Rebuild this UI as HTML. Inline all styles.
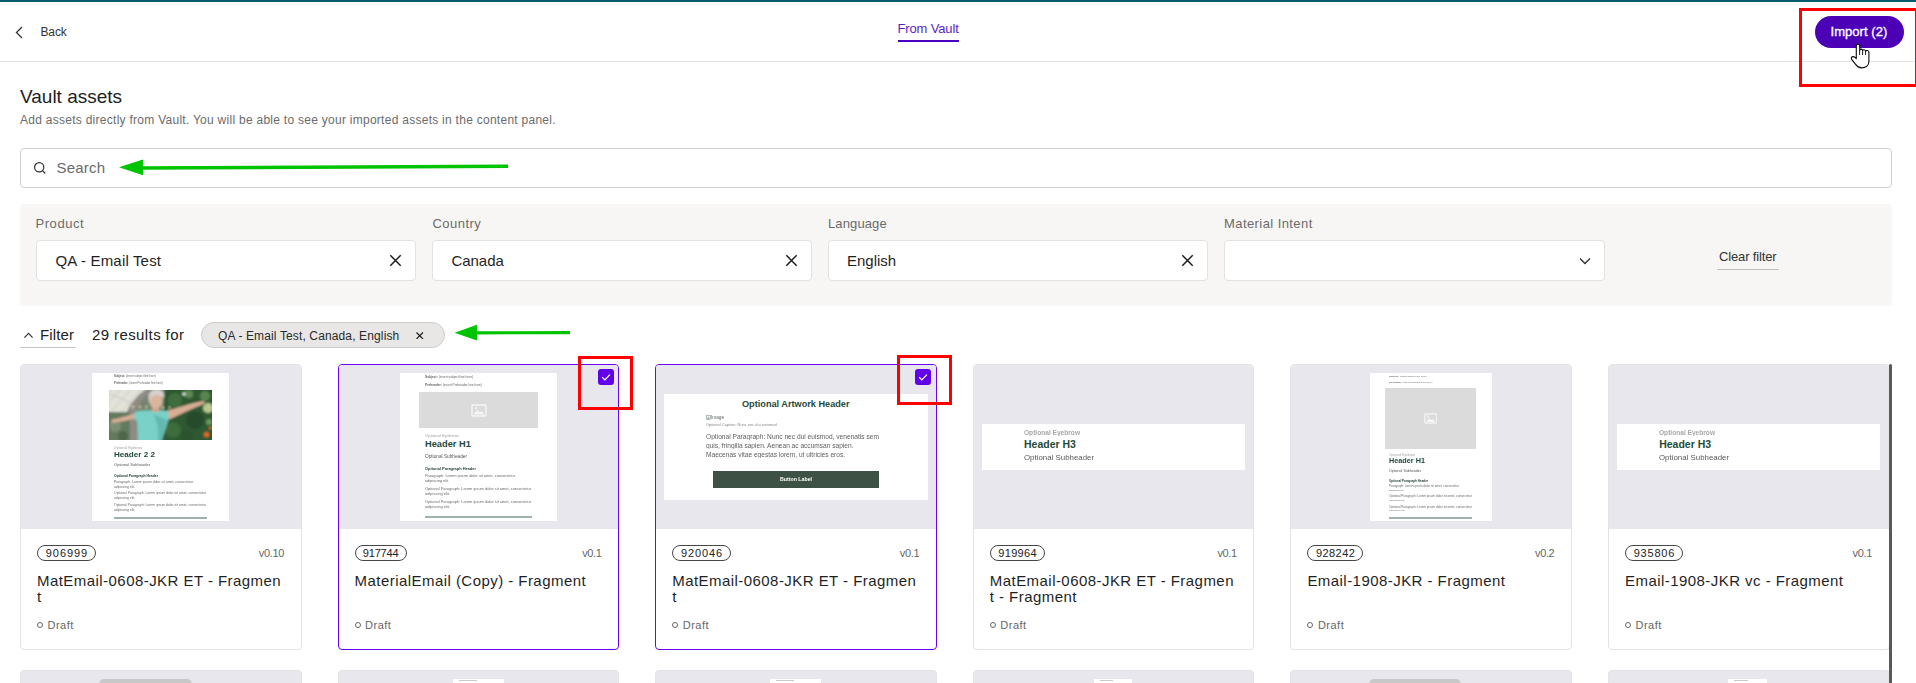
<!DOCTYPE html>
<html><head><meta charset="utf-8">
<style>
*{margin:0;padding:0;box-sizing:border-box}
html,body{width:1916px;height:683px;overflow:hidden;background:#fff;font-family:"Liberation Sans",sans-serif;color:#222}
.a{position:absolute;white-space:nowrap;line-height:1}
#topbar{position:absolute;left:0;top:0;width:1916px;height:2px;background:#075a6d}
#sep{position:absolute;left:0;top:61px;width:1916px;height:1px;background:#e3e3e3}
.btn{position:absolute;left:1815px;top:16px;width:89px;height:32px;border-radius:16px;background:#4b00b8}
.red{position:absolute;border:3px solid #ff0000}
.search{position:absolute;left:20px;top:148px;width:1872px;height:40px;border:1px solid #cfcfcf;border-radius:4px}
.panel{position:absolute;left:20px;top:204px;width:1872px;height:102px;background:#f7f6f4;border-radius:4px}
.inp{position:absolute;top:240px;width:380px;height:41px;background:#fff;border:1px solid #e4e2df;border-radius:4px}
.lbl{font-size:13px;color:#6b6b6b}
.val{font-size:15px;color:#1f1f1f}
.chip{position:absolute;left:201px;top:322px;width:244px;height:26px;border-radius:13px;background:#e8e7e6;border:1px solid #cbcbcb}
.card{position:absolute;top:364px;width:281.6px;height:286px;border:1px solid #e3e2e4;border-radius:4px;overflow:hidden;background:#fff}
.card.sel{border-color:#6a00f4}
.prev{position:absolute;top:365px;width:279.6px;height:164px;background:#e9e7ee;border-radius:3px 3px 0 0}
.photo{background:linear-gradient(90deg,#8d958c 0%,#b9bdb5 12%,#7f8a80 28%,#6fb8b0 38%,#7cc4bd 48%,#3d6a44 60%,#2f5a36 75%,#47703f 90%,#6d8a52 100%)}
.badge{position:absolute;left:16px;top:180px;height:16px;border:1px solid #444;border-radius:8px;font-size:11px;line-height:14px;padding:0 8px;color:#222}
.ver{position:absolute;right:17px;top:185px;font-size:11px;color:#666;line-height:1}
.ttl{position:absolute;left:16px;top:208px;font-size:15px;line-height:16px;color:#1f1f1f;white-space:nowrap}
.draft{position:absolute;left:16px;top:256px;font-size:11px;color:#666;line-height:1}
.draft i{display:inline-block;width:6px;height:6px;border:1px solid #555;border-radius:50%;margin-right:4px;vertical-align:0}
.chk{position:absolute;width:16px;height:16px;background:#6200ea;border-radius:3px}
.card2{position:absolute;top:670px;width:281.6px;height:40px;border:1px solid #e3e2e4;border-radius:4px;background:#e9e7ee}
.w{position:absolute;background:#fff}
</style></head><body>
<div id="topbar"></div>
<!-- header -->
<svg class="a" style="left:15px;top:26px" width="9" height="13" viewBox="0 0 9 13"><path d="M7 1 L1.5 6.5 L7 12" fill="none" stroke="#333" stroke-width="1.3"/></svg>
<div class="a" style="left:40.5px;top:26px;font-size:12px;color:#333;letter-spacing:-0.15px">Back</div>
<div class="a" style="left:897.5px;top:22px;font-size:13px;color:#5b1ec2;letter-spacing:-0.15px">From Vault</div>
<div class="a" style="left:898px;top:40px;width:61px;height:2px;background:#4a00c4"></div>
<div id="sep"></div>
<div class="btn"></div>
<div class="a" style="left:1830.5px;top:25px;font-size:13px;color:#fff;letter-spacing:0.05px;-webkit-text-stroke:0.35px #fff">Import (2)</div>
<div class="red" style="left:1799px;top:8px;width:119px;height:79px"></div>

<!-- title -->
<div class="a" style="left:20px;top:87px;font-size:19px;color:#222">Vault assets</div>
<div class="a" style="left:20px;top:114px;font-size:12px;color:#6b6b6b;letter-spacing:0.27px">Add assets directly from Vault. You will be able to see your imported assets in the content panel.</div>

<!-- search -->
<div class="search"></div>
<svg class="a" style="left:33px;top:161px" width="15" height="15" viewBox="0 0 15 15"><circle cx="6.2" cy="6.3" r="4.6" fill="none" stroke="#333" stroke-width="1.25"/><path d="M9.5 9.6 L12.4 12.5" stroke="#333" stroke-width="1.25"/></svg>
<div class="a" style="left:56.5px;top:160px;font-size:15px;color:#6b6b6b;letter-spacing:0.2px">Search</div>

<!-- panel -->
<div class="panel"></div>
<div class="a lbl" style="left:35.5px;top:217px;letter-spacing:0.55px">Product</div>
<div class="a lbl" style="left:432.5px;top:217px;letter-spacing:0.45px">Country</div>
<div class="a lbl" style="left:828px;top:217px;letter-spacing:0.12px">Language</div>
<div class="a lbl" style="left:1224px;top:217px;letter-spacing:0.42px">Material Intent</div>
<div class="inp" style="left:36px"></div>
<div class="inp" style="left:432px"></div>
<div class="inp" style="left:828px"></div>
<div class="inp" style="left:1224px;width:381px"></div>
<div class="a val" style="left:55.5px;top:253px;letter-spacing:0.17px">QA - Email Test</div>
<div class="a val" style="left:451.5px;top:253px;letter-spacing:-0.05px">Canada</div>
<div class="a val" style="left:847px;top:253px">English</div>
<svg class="a" style="left:389px;top:254px" width="13" height="13" viewBox="0 0 13 13"><path d="M1.3 1.3 L11.7 11.7 M11.7 1.3 L1.3 11.7" stroke="#1a1a1a" stroke-width="1.45"/></svg>
<svg class="a" style="left:785px;top:254px" width="13" height="13" viewBox="0 0 13 13"><path d="M1.3 1.3 L11.7 11.7 M11.7 1.3 L1.3 11.7" stroke="#1a1a1a" stroke-width="1.45"/></svg>
<svg class="a" style="left:1181px;top:254px" width="13" height="13" viewBox="0 0 13 13"><path d="M1.3 1.3 L11.7 11.7 M11.7 1.3 L1.3 11.7" stroke="#1a1a1a" stroke-width="1.45"/></svg>
<svg class="a" style="left:1579px;top:257px" width="12" height="8" viewBox="0 0 12 8"><path d="M1 1.5 L6 6.5 L11 1.5" fill="none" stroke="#333" stroke-width="1.4"/></svg>
<div class="a" style="left:1719px;top:250px;font-size:13px;color:#333;letter-spacing:-0.15px">Clear filter</div>
<div class="a" style="left:1717px;top:269px;width:62px;height:1px;background:#bdbdbd"></div>

<!-- filter row -->
<svg class="a" style="left:23px;top:331px" width="11" height="8" viewBox="0 0 11 8"><path d="M1.4 6.6 L5.5 2.4 L9.6 6.6" fill="none" stroke="#333" stroke-width="1.2"/></svg>
<div class="a" style="left:40px;top:327px;font-size:15px;color:#222;letter-spacing:0.15px">Filter</div>
<div class="a" style="left:20px;top:347px;width:56px;height:1px;background:#c4c4c4"></div>
<div class="a" style="left:92px;top:327px;font-size:15px;color:#222;letter-spacing:0.4px">29 results for</div>
<div class="chip"></div>
<div class="a" style="left:218px;top:330px;font-size:12px;color:#2a2a2a;letter-spacing:0.13px">QA - Email Test, Canada, English</div>
<svg class="a" style="left:416px;top:331.5px" width="7.5" height="7.5" viewBox="0 0 7.5 7.5"><path d="M0.5 0.5 L7 7 M7 0.5 L0.5 7" stroke="#1a1a1a" stroke-width="1.1"/></svg>

<!-- arrows -->
<svg class="a" style="left:0;top:0" width="1916" height="683" viewBox="0 0 1916 683">
<path d="M142 168 L508 166.3" stroke="#00c400" stroke-width="3.6" fill="none"/>
<path d="M119 167.2 L143 159.5 L143 175.3 Z" fill="#00c400"/>
<path d="M476 332.8 L570 332.6" stroke="#00c400" stroke-width="3.2" fill="none"/>
<path d="M454.5 332.8 L477 324.8 L477 340.6 Z" fill="#00c400"/>
</svg>

<!-- cards row 1 -->
<div class="card" style="left:20.0px"></div>
<div class="prev" style="left:21.0px"></div>
<div class="a" style="left:92.00px;top:373.00px;width:137px;height:148px;background:#fff"></div>
<div class="a" style="left:114.00px;top:374.82px;font-size:20px;transform-origin:0 0;transform:scale(0.1408);color:#666;"><b>Subject:</b> (insert subject line here)</div>
<div class="a" style="left:114.00px;top:381.84px;font-size:20px;transform-origin:0 0;transform:scale(0.1379);color:#666;"><b>Preheader:</b> (insert Preheader line here)</div>
<svg class="a" style="left:109px;top:390px" width="103" height="50" viewBox="0 0 103 50">
<defs><filter id="bl" x="-10%" y="-10%" width="120%" height="120%"><feGaussianBlur stdDeviation="1.1"/></filter>
<clipPath id="cp"><rect width="103" height="50"/></clipPath></defs>
<rect width="103" height="50" fill="#34603a"/>
<g filter="url(#bl)" clip-path="url(#cp)">
<rect x="-3" y="-3" width="60" height="56" fill="#74846f"/>
<path d="M-3 -3 H40 C30 4 22 12 18 22 H-3 Z" fill="#e3e2da"/>
<path d="M4 -3 L-3 6 M14 -3 L-3 15 M24 -3 L2 22 M34 -3 L12 22 M-3 4 C8 6 18 10 24 16" stroke="#c9c8c0" stroke-width="1" fill="none"/>
<path d="M40 -3 C30 4 22 12 18 22 L20 53 H30 C28 40 26 30 27 22 C30 12 36 6 44 2 L56 -3 Z" fill="#8f8b85"/>
<rect x="-3" y="22" width="24" height="31" fill="#637a5e"/>
<circle cx="6" cy="36" r="6" fill="#7b9074"/><circle cx="14" cy="46" r="5" fill="#50664c"/>
<path d="M56 -3 H106 V53 H52 Z" fill="#2e5833"/>
<circle cx="66" cy="10" r="7" fill="#3f6e3e"/><circle cx="80" cy="4" r="4" fill="#5e8a55"/><circle cx="75" cy="4" r="1.8" fill="#dfe6d6"/>
<circle cx="86" cy="30" r="9" fill="#264c2b"/><circle cx="64" cy="40" r="8" fill="#3d6c3c"/><circle cx="78" cy="46" r="6" fill="#2a522f"/>
<circle cx="99" cy="18" r="5" fill="#b9c98d"/><circle cx="96" cy="6" r="5" fill="#5a8550"/><circle cx="100" cy="32" r="3" fill="#6c9660"/>
<circle cx="97.5" cy="44.5" r="2.6" fill="#e86a1e"/><circle cx="101.5" cy="38" r="1.5" fill="#e26a20"/>
<g fill="#efe2b8"><circle cx="9" cy="16.5" r="1"/><circle cx="16" cy="16.5" r="1"/><circle cx="24" cy="16.8" r="1.1"/><circle cx="31" cy="17" r="1"/><circle cx="37.5" cy="17" r="1"/><circle cx="54" cy="17.5" r="1.1"/><circle cx="60.5" cy="17.5" r="1"/></g>
<path d="M3 29.5 C10 28.5 18 26 26 23.5 L28 28 C20 30 11 32 4 33 C2.5 33 2 30 3 29.5 Z" fill="#d9ae95"/>
<path d="M57 21 C68 18 82 13 94 11 C96 11 96 13.5 94.5 14 C84 18 70 25 60 29.5 Z" fill="#d9ae95"/>
<path d="M26 22 C32 20 38 20.5 44 20.5 C50 20.5 55 20 59 21.5 L60 28 L52 53 H29 L28 31 L25 29 Z" fill="#79d1c7"/>
<path d="M44 24 C48 30 50 40 49 53 H52 L58 30 Z" fill="#63b9b0"/>
<rect x="43" y="15" width="7" height="7" fill="#cfa58e"/>
<ellipse cx="47" cy="10.5" rx="6.6" ry="8" fill="#dcb59d"/>
<path d="M39.5 9 C39 2 43 -0.5 48 -0.5 C53 -0.5 56 2.5 55 8.5 C52 4 45 4 41.5 7.5 L41 14 Z" fill="#d4d2cf"/>
</g></svg>
<div class="a" style="left:114.00px;top:445.51px;font-size:20px;transform-origin:0 0;transform:scale(0.1774);color:#a5a5a5;">Optional Eyebrow</div>
<div class="a" style="left:114.00px;top:449.92px;font-size:20px;transform-origin:0 0;transform:scale(0.4053);color:#1f4a3a;font-weight:bold;">Header 2 2</div>
<div class="a" style="left:114.00px;top:462.90px;font-size:20px;transform-origin:0 0;transform:scale(0.2023);color:#555;">Optional Subheader</div>
<div class="a" style="left:114.00px;top:473.57px;font-size:20px;transform-origin:0 0;transform:scale(0.1699);color:#1e3a30;font-weight:bold;">Optional Paragraph Header</div>
<div class="a" style="left:114.00px;top:480.06px;font-size:20px;transform-origin:0 0;transform:scale(0.1717);color:#6a6a6a;">Paragraph: Lorem ipsum dolor sit amet, consectetur</div>
<div class="a" style="left:114.00px;top:484.60px;font-size:20px;transform-origin:0 0;transform:scale(0.1672);color:#6a6a6a;">adipiscing elit.</div>
<div class="a" style="left:114.00px;top:491.27px;font-size:20px;transform-origin:0 0;transform:scale(0.1703);color:#6a6a6a;">Optional Paragraph: Lorem ipsum dolor sit amet, consectetur</div>
<div class="a" style="left:114.00px;top:496.00px;font-size:20px;transform-origin:0 0;transform:scale(0.1672);color:#6a6a6a;">adipiscing elit.</div>
<div class="a" style="left:114.00px;top:502.97px;font-size:20px;transform-origin:0 0;transform:scale(0.1703);color:#6a6a6a;">Optional Paragraph: Lorem ipsum dolor sit amet, consectetur</div>
<div class="a" style="left:114.00px;top:508.20px;font-size:20px;transform-origin:0 0;transform:scale(0.1672);color:#6a6a6a;">adipiscing elit.</div>
<div class="a" style="left:114.00px;top:517.00px;width:93px;height:1.6px;background:#9fb2aa"></div>
<div class="a" style="left:37.00px;top:545.00px;height:16px;border:1px solid #474747;border-radius:8px;width:59px;font-size:11px;line-height:14px;color:#222;text-align:center;letter-spacing:0.93px;padding-left:0.93px">906999</div>
<div class="a" style="left:284.00px;top:548.00px;font-size:11px;color:#666;letter-spacing:-0.35px;transform:translateX(-100%)">v0.10</div>
<div class="a" style="left:37.00px;top:573.00px;font-size:15px;line-height:16px;color:#1f1f1f;letter-spacing:0.45px">MatEmail-0608-JKR ET - Fragmen<br>t</div>
<div class="a" style="left:37.00px;top:622.00px;width:6px;height:6px;border:1px solid #666;border-radius:50%"></div>
<div class="a" style="left:47.50px;top:620.00px;font-size:11px;color:#666;letter-spacing:0.5px">Draft</div>
<div class="card2" style="left:20.0px"></div>
<div class="card sel" style="left:337.6px"></div>
<div class="prev" style="left:338.6px"></div>
<div class="a" style="left:400.00px;top:373.00px;width:157px;height:148px;background:#fff"></div>
<div class="a" style="left:425.00px;top:375.34px;font-size:20px;transform-origin:0 0;transform:scale(0.1614);color:#666;"><b>Subject:</b> (insert subject line here)</div>
<div class="a" style="left:425.00px;top:383.35px;font-size:20px;transform-origin:0 0;transform:scale(0.1609);color:#666;"><b>Preheader:</b> (insert Preheader line here)</div>
<div class="a" style="left:419.00px;top:392.00px;width:119px;height:36px;background:#dbdbdb"></div>
<svg class="a" style="left:470.5px;top:403.5px" width="16.0" height="13.0" viewBox="0 0 16 13"><rect x="1" y="1" width="14" height="11" rx="1" fill="none" stroke="#f6f6f6" stroke-width="1.4"/><path d="M2.5 10.5 L6.5 6 L9 8.5 L10.5 7 L13.5 10.5 Z" fill="#f6f6f6"/><circle cx="5" cy="4.2" r="1.1" fill="#f6f6f6"/></svg>
<div class="a" style="left:425.00px;top:433.41px;font-size:20px;transform-origin:0 0;transform:scale(0.2128);color:#a5a5a5;">Optional Eyebrow</div>
<div class="a" style="left:425.00px;top:439.93px;font-size:9.299px;color:#1f4a3a;font-weight:bold;">Header H1</div>
<div class="a" style="left:425.00px;top:453.82px;font-size:20px;transform-origin:0 0;transform:scale(0.2361);color:#555;">Optional Subheader</div>
<div class="a" style="left:425.00px;top:466.65px;font-size:20px;transform-origin:0 0;transform:scale(0.1969);color:#1e3a30;font-weight:bold;">Optional Paragraph Header</div>
<div class="a" style="left:425.00px;top:473.66px;font-size:20px;transform-origin:0 0;transform:scale(0.1956);color:#6a6a6a;">Paragraph: Lorem ipsum dolor sit amet, consectetur</div>
<div class="a" style="left:425.00px;top:478.80px;font-size:20px;transform-origin:0 0;transform:scale(0.1910);color:#6a6a6a;">adipiscing elit.</div>
<div class="a" style="left:425.00px;top:486.55px;font-size:20px;transform-origin:0 0;transform:scale(0.1962);color:#6a6a6a;">Optional Paragraph: Lorem ipsum dolor sit amet, consectetur</div>
<div class="a" style="left:425.00px;top:491.83px;font-size:20px;transform-origin:0 0;transform:scale(0.1990);color:#6a6a6a;">adipiscing elit.</div>
<div class="a" style="left:425.00px;top:499.85px;font-size:20px;transform-origin:0 0;transform:scale(0.1962);color:#6a6a6a;">Optional Paragraph: Lorem ipsum dolor sit amet, consectetur</div>
<div class="a" style="left:425.00px;top:505.43px;font-size:20px;transform-origin:0 0;transform:scale(0.1990);color:#6a6a6a;">adipiscing elit.</div>
<div class="a" style="left:425.00px;top:516.00px;width:107px;height:1.6px;background:#9fb2aa"></div>
<div class="a" style="left:354.60px;top:545.00px;height:16px;border:1px solid #474747;border-radius:8px;width:52px;font-size:11px;line-height:14px;color:#222;text-align:center;letter-spacing:-0.2px;padding-left:-0.2px">917744</div>
<div class="a" style="left:601.60px;top:548.00px;font-size:11px;color:#666;letter-spacing:-0.35px;transform:translateX(-100%)">v0.1</div>
<div class="a" style="left:354.60px;top:573.00px;font-size:15px;line-height:16px;color:#1f1f1f;letter-spacing:0.45px">MaterialEmail (Copy) - Fragment</div>
<div class="a" style="left:354.60px;top:622.00px;width:6px;height:6px;border:1px solid #666;border-radius:50%"></div>
<div class="a" style="left:365.10px;top:620.00px;font-size:11px;color:#666;letter-spacing:0.5px">Draft</div>
<div class="card2" style="left:337.6px"></div>
<div class="card sel" style="left:655.2px"></div>
<div class="prev" style="left:656.2px"></div>
<div class="a" style="left:664.00px;top:394.00px;width:264px;height:106px;background:#fff"></div>
<div class="a" style="left:742.00px;top:400.05px;font-size:9.168px;color:#1f4a3a;font-weight:bold;">Optional Artwork Header</div>
<svg class="a" style="left:706px;top:414.5px" width="5" height="5" viewBox="0 0 5 5"><rect x="0.4" y="0.4" width="4.2" height="4.2" fill="#eee" stroke="#999" stroke-width="0.6"/><path d="M1 3.8 L2.3 2 L3.8 3.8Z" fill="#6a9"/></svg>
<div class="a" style="left:710.50px;top:414.54px;font-size:20px;transform-origin:0 0;transform:scale(0.2339);color:#666;">Image</div>
<div class="a" style="left:706.00px;top:423.34px;font-size:20px;transform-origin:0 0;transform:scale(0.1972);color:#888;">Optional Caption: Nunc nec dui euismod</div>
<div class="a" style="left:706.00px;top:432.52px;font-size:20px;transform-origin:0 0;transform:scale(0.3311);color:#606060;">Optional Paragraph: Nunc nec dui euismod, venenatis sem</div>
<div class="a" style="left:706.00px;top:442.04px;font-size:20px;transform-origin:0 0;transform:scale(0.3291);color:#606060;">quis, fringilla sapien. Aenean ac accumsan sapien.</div>
<div class="a" style="left:706.00px;top:450.74px;font-size:20px;transform-origin:0 0;transform:scale(0.3291);color:#606060;">Maecenas vitae egestas lorem, ut ultricies eros.</div>
<div class="a" style="left:713.00px;top:471.00px;width:166px;height:17px;background:#3d5245"></div>
<div class="a" style="left:780.00px;top:477.10px;font-size:20px;transform-origin:0 0;transform:scale(0.2619);color:#fff;font-weight:bold;">Button Label</div>
<div class="a" style="left:672.20px;top:545.00px;height:16px;border:1px solid #474747;border-radius:8px;width:58.7px;font-size:11px;line-height:14px;color:#222;text-align:center;letter-spacing:0.9px;padding-left:0.9px">920046</div>
<div class="a" style="left:919.20px;top:548.00px;font-size:11px;color:#666;letter-spacing:-0.35px;transform:translateX(-100%)">v0.1</div>
<div class="a" style="left:672.20px;top:573.00px;font-size:15px;line-height:16px;color:#1f1f1f;letter-spacing:0.45px">MatEmail-0608-JKR ET - Fragmen<br>t</div>
<div class="a" style="left:672.20px;top:622.00px;width:6px;height:6px;border:1px solid #666;border-radius:50%"></div>
<div class="a" style="left:682.70px;top:620.00px;font-size:11px;color:#666;letter-spacing:0.5px">Draft</div>
<div class="card2" style="left:655.2px"></div>
<div class="card" style="left:972.8px"></div>
<div class="prev" style="left:973.8px"></div>
<div class="a" style="left:982.00px;top:424.00px;width:263px;height:46px;background:#fff"></div>
<div class="a" style="left:1024.00px;top:428.93px;font-size:20px;transform-origin:0 0;transform:scale(0.3294);color:#a8a8a8;font-weight:bold;">Optional Eyebrow</div>
<div class="a" style="left:1024.00px;top:439.13px;font-size:10.512px;color:#1f4a3a;font-weight:bold;">Header H3</div>
<div class="a" style="left:1024.00px;top:452.99px;font-size:20px;transform-origin:0 0;transform:scale(0.3935);color:#5a5a5a;">Optional Subheader</div>
<div class="a" style="left:989.80px;top:545.00px;height:16px;border:1px solid #474747;border-radius:8px;width:55.3px;font-size:11px;line-height:14px;color:#222;text-align:center;letter-spacing:0.33px;padding-left:0.33px">919964</div>
<div class="a" style="left:1236.80px;top:548.00px;font-size:11px;color:#666;letter-spacing:-0.35px;transform:translateX(-100%)">v0.1</div>
<div class="a" style="left:989.80px;top:573.00px;font-size:15px;line-height:16px;color:#1f1f1f;letter-spacing:0.45px">MatEmail-0608-JKR ET - Fragmen<br>t - Fragment</div>
<div class="a" style="left:989.80px;top:622.00px;width:6px;height:6px;border:1px solid #666;border-radius:50%"></div>
<div class="a" style="left:1000.30px;top:620.00px;font-size:11px;color:#666;letter-spacing:0.5px">Draft</div>
<div class="card2" style="left:972.8px"></div>
<div class="card" style="left:1290.4px"></div>
<div class="prev" style="left:1291.4px"></div>
<div class="a" style="left:1370.00px;top:373.00px;width:122px;height:148px;background:#fff"></div>
<div class="a" style="left:1389.30px;top:374.93px;font-size:20px;transform-origin:0 0;transform:scale(0.1270);color:#666;"><b>Subject:</b> (insert subject line here)</div>
<div class="a" style="left:1389.30px;top:381.06px;font-size:20px;transform-origin:0 0;transform:scale(0.1236);color:#666;"><b>Preheader:</b> (insert Preheader line here)</div>
<div class="a" style="left:1385.00px;top:388.00px;width:91.4px;height:60.6px;background:#dbdbdb"></div>
<svg class="a" style="left:1423.9px;top:412.8px" width="13.6" height="11.0" viewBox="0 0 16 13"><rect x="1" y="1" width="14" height="11" rx="1" fill="none" stroke="#f6f6f6" stroke-width="1.4"/><path d="M2.5 10.5 L6.5 6 L9 8.5 L10.5 7 L13.5 10.5 Z" fill="#f6f6f6"/><circle cx="5" cy="4.2" r="1.1" fill="#f6f6f6"/></svg>
<div class="a" style="left:1389.30px;top:453.02px;font-size:20px;transform-origin:0 0;transform:scale(0.1647);color:#a5a5a5;">Optional Eyebrow</div>
<div class="a" style="left:1389.30px;top:457.05px;font-size:20px;transform-origin:0 0;transform:scale(0.3639);color:#1f4a3a;font-weight:bold;">Header H1</div>
<div class="a" style="left:1389.30px;top:469.09px;font-size:20px;transform-origin:0 0;transform:scale(0.1799);color:#555;">Optional Subheader</div>
<div class="a" style="left:1389.30px;top:478.73px;font-size:20px;transform-origin:0 0;transform:scale(0.1506);color:#1e3a30;font-weight:bold;">Optional Paragraph Header</div>
<div class="a" style="left:1389.30px;top:484.32px;font-size:20px;transform-origin:0 0;transform:scale(0.1521);color:#6a6a6a;">Paragraph: Lorem ipsum dolor sit amet, consectetur</div>
<div class="a" style="left:1389.30px;top:488.60px;font-size:20px;transform-origin:0 0;transform:scale(0.1194);color:#6a6a6a;">adipiscing elit.</div>
<div class="a" style="left:1389.30px;top:494.31px;font-size:20px;transform-origin:0 0;transform:scale(0.1536);color:#6a6a6a;">Optional Paragraph: Lorem ipsum dolor sit amet, consectetur</div>
<div class="a" style="left:1389.30px;top:499.03px;font-size:20px;transform-origin:0 0;transform:scale(0.1274);color:#6a6a6a;">adipiscing elit.</div>
<div class="a" style="left:1389.30px;top:504.91px;font-size:20px;transform-origin:0 0;transform:scale(0.1536);color:#6a6a6a;">Optional Paragraph: Lorem ipsum dolor sit amet, consectetur</div>
<div class="a" style="left:1389.30px;top:509.33px;font-size:20px;transform-origin:0 0;transform:scale(0.1274);color:#6a6a6a;">adipiscing elit.</div>
<div class="a" style="left:1389.30px;top:517.00px;width:83px;height:1.6px;background:#9fb2aa"></div>
<div class="a" style="left:1307.40px;top:545.00px;height:16px;border:1px solid #474747;border-radius:8px;width:56px;font-size:11px;line-height:14px;color:#222;text-align:center;letter-spacing:0.45px;padding-left:0.45px">928242</div>
<div class="a" style="left:1554.40px;top:548.00px;font-size:11px;color:#666;letter-spacing:-0.35px;transform:translateX(-100%)">v0.2</div>
<div class="a" style="left:1307.40px;top:573.00px;font-size:15px;line-height:16px;color:#1f1f1f;letter-spacing:0.45px">Email-1908-JKR - Fragment</div>
<div class="a" style="left:1307.40px;top:622.00px;width:6px;height:6px;border:1px solid #666;border-radius:50%"></div>
<div class="a" style="left:1317.90px;top:620.00px;font-size:11px;color:#666;letter-spacing:0.5px">Draft</div>
<div class="card2" style="left:1290.4px"></div>
<div class="card" style="left:1608.0px"></div>
<div class="prev" style="left:1609.0px"></div>
<div class="a" style="left:1617.20px;top:424.00px;width:263px;height:46px;background:#fff"></div>
<div class="a" style="left:1659.20px;top:428.93px;font-size:20px;transform-origin:0 0;transform:scale(0.3294);color:#a8a8a8;font-weight:bold;">Optional Eyebrow</div>
<div class="a" style="left:1659.20px;top:439.13px;font-size:10.512px;color:#1f4a3a;font-weight:bold;">Header H3</div>
<div class="a" style="left:1659.20px;top:452.99px;font-size:20px;transform-origin:0 0;transform:scale(0.3935);color:#5a5a5a;">Optional Subheader</div>
<div class="a" style="left:1625.00px;top:545.00px;height:16px;border:1px solid #474747;border-radius:8px;width:58px;font-size:11px;line-height:14px;color:#222;text-align:center;letter-spacing:0.78px;padding-left:0.78px">935806</div>
<div class="a" style="left:1872.00px;top:548.00px;font-size:11px;color:#666;letter-spacing:-0.35px;transform:translateX(-100%)">v0.1</div>
<div class="a" style="left:1625.00px;top:573.00px;font-size:15px;line-height:16px;color:#1f1f1f;letter-spacing:0.45px">Email-1908-JKR vc - Fragment</div>
<div class="a" style="left:1625.00px;top:622.00px;width:6px;height:6px;border:1px solid #666;border-radius:50%"></div>
<div class="a" style="left:1635.50px;top:620.00px;font-size:11px;color:#666;letter-spacing:0.5px">Draft</div>
<div class="card2" style="left:1608.0px"></div>
<div class="a" style="left:99.00px;top:679.00px;width:93px;height:10px;background:#c8c8c8;border-radius:5px"></div>
<div class="a" style="left:453.00px;top:679.00px;width:51px;height:10px;background:#fff"></div>
<div class="a" style="left:459.00px;top:680.00px;width:17.8px;height:1px;background:#c9c9c9"></div>
<div class="a" style="left:459.00px;top:682.50px;width:28.1px;height:1px;background:#9a9a9a"></div>
<div class="a" style="left:770.00px;top:679.00px;width:51px;height:10px;background:#fff"></div>
<div class="a" style="left:776.00px;top:680.00px;width:17.8px;height:1px;background:#c9c9c9"></div>
<div class="a" style="left:776.00px;top:682.50px;width:28.1px;height:1px;background:#9a9a9a"></div>
<div class="a" style="left:1094.00px;top:679.00px;width:38px;height:10px;background:#fff"></div>
<div class="a" style="left:1100.00px;top:680.00px;width:13.3px;height:1px;background:#c9c9c9"></div>
<div class="a" style="left:1100.00px;top:682.50px;width:20.9px;height:1px;background:#9a9a9a"></div>
<div class="a" style="left:1728.00px;top:679.00px;width:39px;height:10px;background:#fff"></div>
<div class="a" style="left:1734.00px;top:680.00px;width:13.6px;height:1px;background:#c9c9c9"></div>
<div class="a" style="left:1734.00px;top:682.50px;width:21.5px;height:1px;background:#9a9a9a"></div>
<div class="a" style="left:1369.00px;top:679.00px;width:92px;height:10px;background:#c8c8c8;border-radius:5px"></div>
<div class="chk" style="left:598px;top:369px"></div>
<svg class="a" style="left:598px;top:369px" width="16" height="16" viewBox="0 0 16 16"><path d="M4.2 8.3 L6.9 10.9 L11.9 5.6" fill="none" stroke="#fff" stroke-width="1.3"/></svg>
<div class="chk" style="left:915.4px;top:369px"></div>
<svg class="a" style="left:915.4px;top:369px" width="16" height="16" viewBox="0 0 16 16"><path d="M4.2 8.3 L6.9 10.9 L11.9 5.6" fill="none" stroke="#fff" stroke-width="1.3"/></svg>
<div class="red" style="left:578px;top:356px;width:55px;height:54px"></div>
<div class="red" style="left:897px;top:355px;width:55px;height:50px"></div>
<svg class="a" style="left:1849px;top:43px" width="23" height="27" viewBox="0 0 23 27"><path d="M7.3 14.8 L7.3 2.7 C7.3 0.7 10.7 0.7 10.7 2.7 L10.7 7.6 C10.7 5.7 13.6 5.7 13.6 7.6 C13.6 6.4 16.6 6.4 16.6 8.3 C16.6 7.1 19.9 7.1 19.9 9.2 L19.9 18.5 C19.9 22.6 16.6 24.8 12.6 24.8 C9.6 24.8 7.9 23.2 6.6 21.4 L2.7 16.3 C1.8 15.1 2.8 13.3 4.3 13.6 C5.3 13.8 6.4 14.4 7.3 15.6 Z" fill="#fff" stroke="#111" stroke-width="1.15" stroke-linejoin="round"/><path d="M10.6 7.4 L10.6 12 M13.6 7.6 L13.6 12 M16.6 8.3 L16.6 12" stroke="#111" stroke-width="0.95"/></svg>
<div class="a" style="left:1889.00px;top:364.00px;width:3px;height:330px;background:#5c5855;border-radius:1.5px"></div>
</body></html>
